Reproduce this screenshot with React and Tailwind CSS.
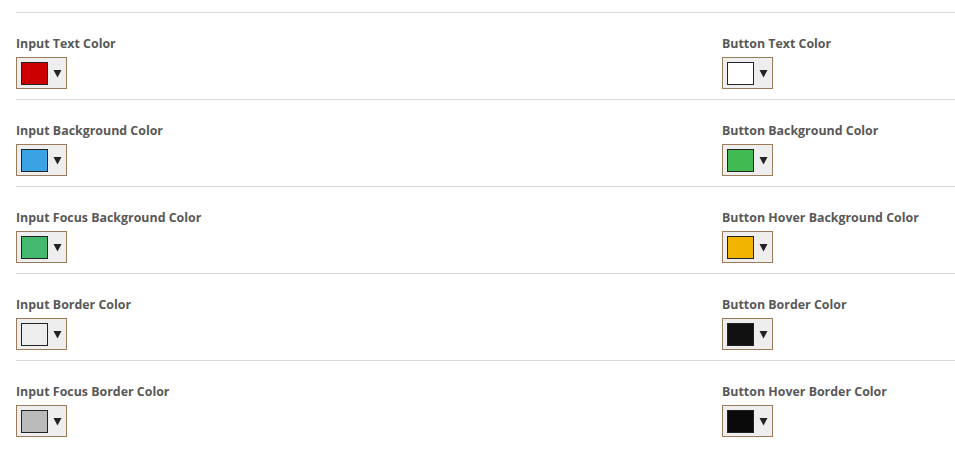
import React from "react";

const rows = [
  [
    { label: "Input Text Color", color: "#cc0000" },
    { label: "Button Text Color", color: "#ffffff" },
  ],
  [
    { label: "Input Background Color", color: "#3aa3e3" },
    { label: "Button Background Color", color: "#3fbb51" },
  ],
  [
    { label: "Input Focus Background Color", color: "#42b96d" },
    { label: "Button Hover Background Color", color: "#f0b400" },
  ],
  [
    { label: "Input Border Color", color: "#eeeeee" },
    { label: "Button Border Color", color: "#111111" },
  ],
  [
    { label: "Input Focus Border Color", color: "#bbbbbb" },
    { label: "Button Hover Border Color", color: "#0a0a0a" },
  ],
];

function Picker({ label, color }) {
  return (
    <div className="flex flex-col">
      <div className="text-[12.4px] leading-[16px] font-bold text-[#585858] mb-[5px] whitespace-nowrap">
        {label}
      </div>
      <div className="flex items-center w-[51px] h-[32px] border border-[#9c7b5a] bg-[#eeeeee] pl-[4px]">
        <div
          className="w-[27px] h-[23px] border border-[#222222]"
          style={{ backgroundColor: color }}
        />
        <svg width="9" height="8" viewBox="0 0 9 8" className="ml-[5px] mt-[1px]">
          <polygon points="0.5,0 8.5,0 4.5,7.5" fill="#222222" />
        </svg>
      </div>
    </div>
  );
}

export default function App() {
  return (
    <div
      className="bg-white w-[955px] h-[461px] pt-[12px] pl-[16px]"
      style={{ fontFamily: '"Open Sans", "Liberation Sans", sans-serif' }}
    >
      {rows.map((row, i) => (
        <div
          key={i}
          className="border-t border-[#d8d8d8] pt-[23px] pb-[10px] grid grid-cols-[706px_1fr]"
        >
          <Picker {...row[0]} />
          <Picker {...row[1]} />
        </div>
      ))}
    </div>
  );
}
